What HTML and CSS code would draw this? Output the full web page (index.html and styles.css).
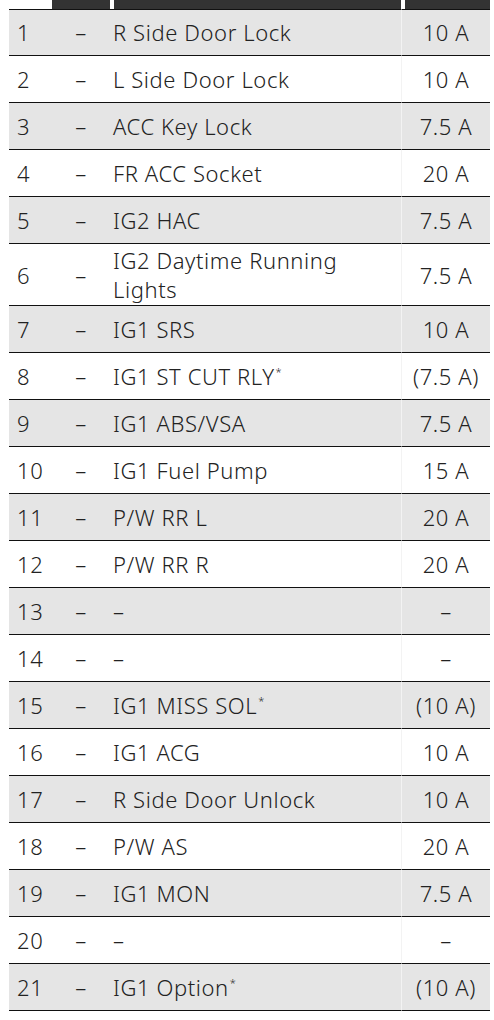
FILE: index.html
```html
<!DOCTYPE html>
<html lang="en">
<head>
<meta charset="utf-8">
<title>Fuse list</title>
<link rel="stylesheet" href="styles.css">
</head>
<body>
<table class="fuses">
  <colgroup>
    <col class="c-num">
    <col class="c-dash">
    <col class="c-name">
    <col class="c-amp">
  </colgroup>
  <thead>
    <tr>
      <th class="h-blank"></th>
      <th class="h-dash"></th>
      <th class="h-name"></th>
      <th class="h-amp"></th>
    </tr>
  </thead>
  <tbody>
    <tr><td class="num">1</td><td class="dash">–</td><td class="name">R Side Door Lock</td><td class="amp">10 A</td></tr>
    <tr><td class="num">2</td><td class="dash">–</td><td class="name">L Side Door Lock</td><td class="amp">10 A</td></tr>
    <tr><td class="num">3</td><td class="dash">–</td><td class="name">ACC Key Lock</td><td class="amp">7.5 A</td></tr>
    <tr><td class="num">4</td><td class="dash">–</td><td class="name">FR ACC Socket</td><td class="amp">20 A</td></tr>
    <tr><td class="num">5</td><td class="dash">–</td><td class="name">IG2 HAC</td><td class="amp">7.5 A</td></tr>
    <tr class="tall"><td class="num">6</td><td class="dash">–</td><td class="name">IG2 Daytime Running Lights</td><td class="amp">7.5 A</td></tr>
    <tr><td class="num">7</td><td class="dash">–</td><td class="name">IG1 SRS</td><td class="amp">10 A</td></tr>
    <tr><td class="num">8</td><td class="dash">–</td><td class="name">IG1 ST CUT RLY<sup>*</sup></td><td class="amp">(7.5 A)</td></tr>
    <tr><td class="num">9</td><td class="dash">–</td><td class="name">IG1 ABS/VSA</td><td class="amp">7.5 A</td></tr>
    <tr><td class="num">10</td><td class="dash">–</td><td class="name">IG1 Fuel Pump</td><td class="amp">15 A</td></tr>
    <tr><td class="num">11</td><td class="dash">–</td><td class="name">P/W RR L</td><td class="amp">20 A</td></tr>
    <tr><td class="num">12</td><td class="dash">–</td><td class="name">P/W RR R</td><td class="amp">20 A</td></tr>
    <tr><td class="num">13</td><td class="dash">–</td><td class="name">–</td><td class="amp">–</td></tr>
    <tr><td class="num">14</td><td class="dash">–</td><td class="name">–</td><td class="amp">–</td></tr>
    <tr><td class="num">15</td><td class="dash">–</td><td class="name">IG1 MISS SOL<sup>*</sup></td><td class="amp">(10 A)</td></tr>
    <tr><td class="num">16</td><td class="dash">–</td><td class="name">IG1 ACG</td><td class="amp">10 A</td></tr>
    <tr><td class="num">17</td><td class="dash">–</td><td class="name">R Side Door Unlock</td><td class="amp">10 A</td></tr>
    <tr><td class="num">18</td><td class="dash">–</td><td class="name">P/W AS</td><td class="amp">20 A</td></tr>
    <tr><td class="num">19</td><td class="dash">–</td><td class="name">IG1 MON</td><td class="amp">7.5 A</td></tr>
    <tr><td class="num">20</td><td class="dash">–</td><td class="name">–</td><td class="amp">–</td></tr>
    <tr><td class="num">21</td><td class="dash">–</td><td class="name">IG1 Option<sup>*</sup></td><td class="amp">(10 A)</td></tr>
  </tbody>
</table>
</body>
</html>
```

FILE: styles.css
```css
html, body {
  margin: 0;
  padding: 0;
  background: #ffffff;
}

body {
  font-family: "Noto Sans", "Open Sans", sans-serif;
  color: #222222;
}

.fuses {
  margin-left: 9px;
  width: 481px;
  table-layout: fixed;
  border-collapse: separate;
  border-spacing: 0;
  font-size: 22px;
  letter-spacing: 0.6px;
}

.c-num { width: 43px; }
.c-dash { width: 58px; }
.c-name { width: 291px; }
.c-amp { width: 89px; }

.fuses thead th {
  height: 9px;
  padding: 0;
  background: #333333;
}

.fuses thead th.h-blank {
  background: transparent;
}

.fuses thead th.h-name,
.fuses thead th.h-amp {
  border-left: 4px solid #ffffff;
}

.fuses tbody td {
  height: 47px;
  box-sizing: border-box;
  padding: 0;
  line-height: 29px;
  vertical-align: middle;
  border-bottom: 1px solid #111111;
  font-weight: 300;
}

.fuses tbody tr:first-child td {
  height: 47px;
  border-top: 1px solid #111111;
}

.fuses tbody tr:nth-child(odd) td {
  background: #e5e5e5;
}

.fuses tbody tr.tall td {
  height: 62px;
  padding-top: 2px;
  padding-bottom: 1px;
}

.num {
  padding-left: 8px !important;
  text-align: left;
}

.dash {
  text-align: center;
}

.name {
  padding-left: 3px !important;
  padding-right: 3px !important;
}

.amp {
  text-align: center;
  border-left: 1px solid #f3f3f3;
}

.name sup {
  font-size: 11px;
  line-height: 0;
  vertical-align: 9px;
  margin-left: 1px;
}
```
